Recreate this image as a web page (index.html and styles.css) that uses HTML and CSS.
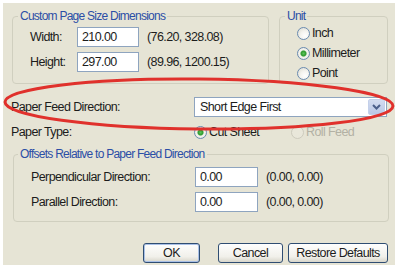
FILE: index.html
```html
<!DOCTYPE html>
<html>
<head>
<meta charset="UTF-8">
<link rel="stylesheet" href="styles.css">
</head>
<body>
<div class="dialog">
	<div class="top">
		<fieldset class="grp grp-size">
			<legend>Custom Page Size Dimensions</legend>
			<div class="row first">
				<span class="lbl lbl-size">Width:</span>
				<span class="box box-size">210.00</span>
				<span class="range">(76.20, 328.08)</span>
			</div>
			<div class="row">
				<span class="lbl lbl-size">Height:</span>
				<span class="box box-size">297.00</span>
				<span class="range">(89.96, 1200.15)</span>
			</div>
		</fieldset>
		<fieldset class="grp grp-unit">
			<legend>Unit</legend>
			<div class="opt"><span class="radio"></span>Inch</div>
			<div class="opt"><span class="radio on"></span>Millimeter</div>
			<div class="opt"><span class="radio"></span>Point</div>
		</fieldset>
	</div>

	<div class="row feed">
		<span class="lbl lbl-main">Paper Feed Direction:</span>
		<div class="select">
			<span class="select-text">Short Edge First</span>
			<span class="drop">
				<svg width="9" height="6" viewBox="0 0 9 6"><path d="M1 1 L4.5 4.5 L8 1" fill="none" stroke="#4b5f8a" stroke-width="2"/></svg>
			</span>
		</div>
	</div>

	<div class="row ptype">
		<span class="lbl lbl-main">Paper Type:</span>
		<div class="opt inline"><span class="radio on"></span>Cut Sheet</div>
		<div class="opt inline off"><span class="radio dis"></span>Roll Feed</div>
	</div>

	<fieldset class="grp grp-off">
		<legend>Offsets Relative to Paper Feed Direction</legend>
		<div class="row first">
			<span class="lbl lbl-off">Perpendicular Direction:</span>
			<span class="box box-off">0.00</span>
			<span class="range">(0.00, 0.00)</span>
		</div>
		<div class="row">
			<span class="lbl lbl-off">Parallel Direction:</span>
			<span class="box box-off">0.00</span>
			<span class="range">(0.00, 0.00)</span>
		</div>
	</fieldset>

	<div class="buttons">
		<button class="btn btn-ok">OK</button>
		<button class="btn btn-cancel">Cancel</button>
		<button class="btn btn-restore">Restore Defaults</button>
	</div>

	<svg class="mark" width="395" height="271" viewBox="0 0 395 271">
		<ellipse cx="199" cy="104" rx="194" ry="25" fill="none" stroke="#e0312c" stroke-width="3" transform="rotate(0.6 199 104)"/>
	</svg>
</div>
</body>
</html>
```

FILE: styles.css
```css
*{margin:0;padding:0;box-sizing:border-box;}
body{background:#fff;font-family:"Liberation Sans",Arial,sans-serif;font-size:12.5px;color:#1c1c1c;letter-spacing:-0.6px;}

.dialog{position:relative;margin:3px 0 0 3px;width:392px;height:262px;
	background:#e6e4d5;padding:6px 7px 0 9px;}

.top{display:flex;gap:10px;}

.grp{border:1px solid #d0cfbf;border-radius:4px;min-width:0;}
.grp legend{padding:0 2px;line-height:14px;color:#2b4ea6;font-size:12px;letter-spacing:-0.75px;}

.grp-size{width:257px;padding:0 0 9px 5px;}
.grp-unit{width:109px;padding:0 0 0 5px;}
.grp-off{width:376px;margin:5px 0 0 1px;padding:0 0 9px 4px;}

.row{display:flex;align-items:center;height:20px;margin-top:5px;}
.row.first{margin-top:4px;}
.grp-size .row{padding-left:12px;}
.grp-off .row{padding-left:13px;}
.grp-off .row.first{margin-top:6px;}

.lbl{flex:none;}
.lbl-size{width:47px;}
.lbl-main{width:183px;}
.lbl-off{width:164px;}

.box{height:20px;background:#fff;border:1px solid #8ea4bf;padding-left:4px;line-height:18px;}
.box-size{width:62px;}
.box-off{width:63px;}
.range{margin-left:8px;}

.opt{display:flex;align-items:center;height:20px;padding-left:12px;}
.opt.inline{padding-left:0;width:103px;}
.opt.off{color:#b3b1a4;}

.radio{width:13px;height:13px;border-radius:50%;margin-right:2px;flex:none;
	border:1px solid #6a8bb0;
	background:radial-gradient(circle at 65% 70%,#fff 0,#f4f3ee 45%,#d8d7cd 100%);}
.radio.on{background:radial-gradient(circle,#5cc35a 0,#2e9a2e 2.5px,#e8eee4 3.5px,#f4f3ee 55%,#d8d7cd 100%);}
.radio.dis{border-color:#cdcbbd;background:#e9e7da;}

.feed{margin-top:13px;margin-left:-1px;}
.ptype{margin-top:5px;margin-left:-1px;}

.select{display:flex;align-items:center;width:193px;height:20px;background:#fff;
	border:1px solid #8ea4bf;padding:1px;}
.select-text{flex:1;padding-left:4px;}
.drop{width:17px;height:100%;display:flex;align-items:center;justify-content:center;
	background:linear-gradient(#d3dcf0,#bac8e6);border:1px solid #c4d0ea;border-radius:2px;}

.buttons{display:flex;justify-content:flex-end;margin-top:21px;}
.btn{height:20px;font-family:inherit;font-size:12.5px;letter-spacing:-0.6px;color:#1c1c1c;
	border:1px solid #2f4d72;border-radius:3px;
	background:linear-gradient(#fefefe,#f1f0ea 70%,#d8d6cb);}
.btn-ok{width:57px;margin-right:18px;box-shadow:inset 0 0 0 1px #a9c0e6;}
.btn-cancel{width:65px;margin-right:5px;}
.btn-restore{width:100px;}

.mark{position:absolute;left:-3px;top:-3px;pointer-events:none;}
```
